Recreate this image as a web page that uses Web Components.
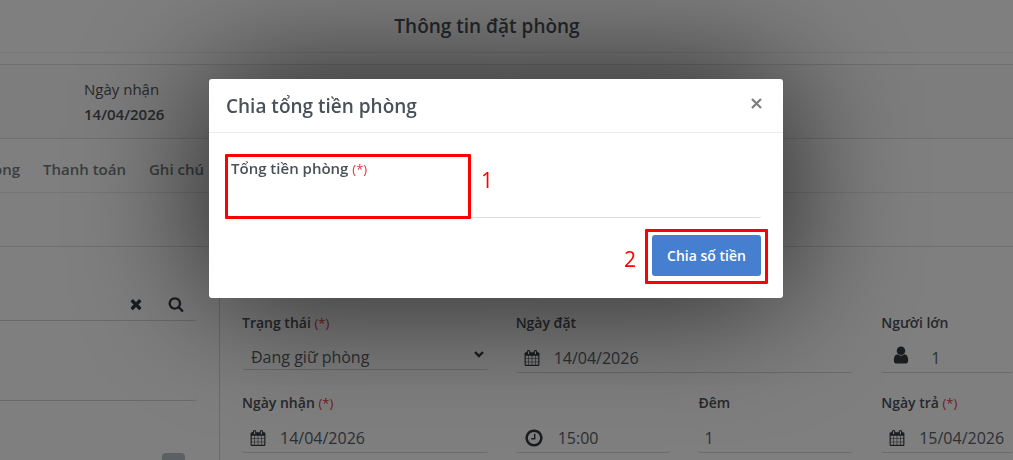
<!DOCTYPE html>
<html lang="vi">
<head>
<meta charset="utf-8">
<title>Thông tin đặt phòng</title>
<style>
body{margin:0;overflow:hidden;background:#fff;color:#495057;font-family:"Open Sans","Noto Sans",sans-serif;font-size:14px;line-height:20px}
</style>
</head>
<body>
<booking-page></booking-page>
<split-dialog heading="Chia tổng tiền phòng">
  <split-form></split-form>
</split-dialog>
<script>
const ICONS={
times:"M1490 1322q0 40-28 68l-136 136q-28 28-68 28t-68-28l-294-294-294 294q-28 28-68 28t-68-28l-136-136q-28-28-28-68t28-68l294-294-294-294q-28-28-28-68t28-68l136-136q28-28 68-28t68 28l294 294 294-294q28-28 68-28t68 28l136 136q28 28 28 68t-28 68l-294 294 294 294q28 28 28 68z",
search:"M1216 832q0-185-131.5-316.5t-316.5-131.5-316.5 131.5-131.5 316.5 131.5 316.5 316.5 131.5 316.5-131.5 131.5-316.5zm512 832q0 52-38 90t-90 38q-54 0-90-38l-343-342q-179 124-399 124-143 0-273.5-55.5t-225-150-150-225-55.5-273.5 55.5-273.5 150-225 225-150 273.5-55.5 273.5 55.5 225 150 150 225 55.5 273.5q0 220-124 399l343 343q37 37 37 90z",
user:"M1536 1399q0 109-62.5 187t-150.5 78h-854q-88 0-150.5-78t-62.5-187q0-85 8.5-160.5t31.5-152 58.5-131 94-89 134.5-34.5q131 128 313 128t313-128q76 0 134.5 34.5t94 89 58.5 131 31.5 152 8.5 160.5zm-256-887q0 159-112.5 271.5t-271.5 112.5-271.5-112.5-112.5-271.5 112.5-271.5 271.5-112.5 271.5 112.5 112.5 271.5z",
calendar:"M192 1664h288v-288h-288v288zm352 0h320v-288h-320v288zm-352-352h288v-320h-288v320zm352 0h320v-320h-320v320zm-352-384h288v-288h-288v288zm736 736h320v-288h-320v288zm-384-736h320v-288h-320v288zm768 736h288v-288h-288v288zm-384-352h320v-320h-320v320zm-352-864v-288q0-13-9.5-22.5t-22.5-9.5h-64q-13 0-22.5 9.5t-9.5 22.5v288q0 13 9.5 22.5t22.5 9.5h64q13 0 22.5-9.5t9.5-22.5zm736 864h288v-320h-288v320zm-384-384h320v-288h-320v288zm384 0h288v-288h-288v288zm32-480v-288q0-13-9.5-22.5t-22.5-9.5h-64q-13 0-22.5 9.5t-9.5 22.5v288q0 13 9.5 22.5t22.5 9.5h64q13 0 22.5-9.5t9.5-22.5zm384-64v1280q0 52-38 90t-90 38h-1408q-52 0-90-38t-38-90v-1280q0-52 38-90t90-38h128v-96q0-66 47-113t113-47h64q66 0 113 47t47 113v96h384v-96q0-66 47-113t113-47h64q66 0 113 47t47 113v96h128q52 0 90 38t38 90z",
clock:"M1024 544v448q0 14-9 23t-23 9h-320q-14 0-23-9t-9-23v-64q0-14 9-23t23-9h224v-352q0-14 9-23t23-9h64q14 0 23 9t9 23zm416 352q0-148-73-273t-198-198-273-73-273 73-198 198-73 273 73 273 198 198 273 73 273-73 198-198 73-273zm224 0q0 209-103 385.5t-279.5 279.5-385.5 103-385.5-103-279.5-279.5-103-385.5 103-385.5 279.5-279.5 385.5-103 385.5 103 279.5 279.5 103 385.5z"
};
function define(name,render){
  customElements.define(name,class extends HTMLElement{
    connectedCallback(){
      if(this.shadowRoot)return;
      this.attachShadow({mode:"open"}).innerHTML=render(this);
    }
  });
}

define("ui-icon",el=>`<style>:host{display:block;flex:none;width:16px;height:16px}svg{display:block;width:100%;height:100%;fill:currentColor}</style>
<svg viewBox="0 0 1792 1792" aria-hidden="true"><path d="${ICONS[el.getAttribute("name")]}"/></svg>`);

define("form-field",el=>{
  const icon=el.getAttribute("icon"),value=el.getAttribute("value");
  return `<style>
:host{display:block;min-width:0}
label{display:block;font-weight:600;color:#4c5056;margin-bottom:2px}
label span{font-weight:400;font-size:13px;color:#e03c3c}
.box{display:flex;align-items:center;box-sizing:border-box;height:38px;border-bottom:1px solid #d4d6da;border-radius:3px;padding:9px 0 0 6px;color:#343a40}
.box.icon{padding-left:8px;gap:14px}
.box.user{gap:20px;padding-left:10px}
.box.pick{height:35px;padding-left:9px;padding-right:3px}
ui-icon.clock{width:20px;height:20px}
ui-icon.user{width:20px;height:20px;margin-bottom:6px}
input,select{flex:1;min-width:0;width:0;border:0;padding:0;margin:0;background:none;outline:0;font:400 16px/24px "Open Sans","Noto Sans",sans-serif;color:#5a6068;appearance:none}
svg{flex:none;width:12px;height:12px;margin-bottom:6px}
</style>
<label for="c">${el.getAttribute("label")}${el.hasAttribute("required")?" <span>(*)</span>":""}</label>
${el.hasAttribute("select")
?`<div class="box pick"><select id="c"><option>${value}</option></select><svg viewBox="0 0 12 12" aria-hidden="true"><path d="M2 4l4 4 4-4" fill="none" stroke="currentColor" stroke-width="2.4"/></svg></div>`
:`<div class="box ${icon?"icon "+icon:""}">${icon?`<ui-icon class="${icon}" name="${icon}"></ui-icon>`:""}<input id="c" type="text" value="${value}"></div>`}`;
});

define("tab-bar",()=>`<style>
:host{display:block;border-bottom:1px solid #e6e8ec}
nav{display:flex;gap:23px;height:53px;align-items:center;margin-left:-7px;padding-top:6px;box-sizing:border-box}
a{font-size:15px;font-weight:600;color:#777a7e;text-decoration:none;white-space:nowrap}
</style><nav><a href="#phong">òng</a><a href="#thanh-toan">Thanh toán</a><a href="#ghi-chu">Ghi chú</a></nav>`);

define("guest-search",()=>`<style>
:host{display:block;width:197px;flex:none}
.line{display:flex;justify-content:flex-end;align-items:center;gap:24px;box-sizing:border-box;border-bottom:1px solid #d4d6da;border-radius:0 3px 3px 0}
.first{height:74px;padding:41px 13px 0 0}
.second{height:80px}
input{flex:1;min-width:0;border:0;background:none;outline:0;height:30px}
button{border:0;background:none;padding:0;color:#343a40;flex:none}
.add{display:block;width:23px;height:24px;margin:52px 12px 0 auto;background:#b9bfc9;border-radius:4px}
</style>
<div class="line first"><input type="text" aria-label="Tìm khách"><button type="button" aria-label="Xóa"><ui-icon name="times"></ui-icon></button><button type="button" aria-label="Tìm"><ui-icon name="search"></ui-icon></button></div>
<div class="line second"><input type="text" aria-label="Tên khách"></div>
<button class="add" type="button" aria-label="Thêm"></button>`);

define("booking-page",()=>`<style>
:host{display:block}
header{height:52px;border-bottom:1px solid #e9ecef;display:flex;align-items:center;justify-content:center;box-sizing:content-box;padding-right:39px}
h1{margin:0;font-size:19px;line-height:26px;font-weight:600}
.summary{margin-top:11px;border-top:1px solid #dcdfe2;border-bottom:1px solid #dcdfe2;background:#fafafa;padding:14px 84px}
dl{margin:0}
dt,dd{margin:0;line-height:20px;color:#4f5459;font-size:15px}
dd{font-weight:600;margin-top:5px}
.strip{height:53px;border-bottom:1px solid #dcdfe2}
.cols{display:flex;gap:22px;align-items:stretch}
.panel{flex:1;min-width:0;border-left:1px solid #d4d6da;padding:66px 0 20px 22px;display:grid;grid-template-columns:246fr 155fr 155fr 132fr;column-gap:28px;row-gap:20px;align-items:start;grid-auto-rows:60px}
.wide{grid-column:span 2}
</style>
<header><h1>Thông tin đặt phòng</h1></header>
<section class="summary"><dl><dt>Ngày nhận</dt><dd>14/04/2026</dd></dl></section>
<tab-bar></tab-bar>
<div class="strip"></div>
<div class="cols">
<guest-search></guest-search>
<section class="panel">
<form-field label="Trạng thái" required select value="Đang giữ phòng"></form-field>
<form-field class="wide" label="Ngày đặt" icon="calendar" value="14/04/2026"></form-field>
<form-field label="Người lớn" icon="user" value="1"></form-field>
<form-field label="Ngày nhận" required icon="calendar" value="14/04/2026"></form-field>
<form-field label="&nbsp;" icon="clock" value="15:00"></form-field>
<form-field label="Đêm" value="1"></form-field>
<form-field label="Ngày trả" required icon="calendar" value="15/04/2026"></form-field>
</section>
</div>`);

define("split-dialog",el=>`<style>
:host{position:fixed;inset:0;background:rgba(0,0,0,.5);display:block;padding:79px 21px 0 0}
.dialog{max-width:574px;margin:0 auto;background:#fff;border-radius:3px;box-shadow:0 0 135px rgba(0,0,0,.75)}
header{display:flex;align-items:center;justify-content:space-between;height:53px;padding:0 20px 0 17px;border-bottom:1px solid #e9ecef}
h2{margin:0;font-size:19px;line-height:26px;font-weight:600}
button{border:0;background:none;padding:0;width:13px;height:13px;color:#808080;margin-bottom:4px}
svg{display:block;width:13px;height:13px}
</style>
<div class="dialog" role="dialog" aria-modal="true" aria-labelledby="t">
<header><h2 id="t">${el.getAttribute("heading")}</h2><button type="button" aria-label="Đóng"><svg viewBox="0 0 13 13"><path d="M2 2l9 9M11 2l-9 9" stroke="currentColor" stroke-width="2.3"/></svg></button></header>
<slot></slot>
</div>`);

define("step-mark",el=>`<style>
:host{position:absolute;box-sizing:border-box;border:3px solid red;border-radius:1px;pointer-events:none}
span{position:absolute;color:red;font-size:21px;line-height:24px}
:host([side=right]) span{left:100%;top:11px;margin-left:13px}
:host([side=left]) span{right:100%;top:15px;margin-right:12px}
</style><span>${el.getAttribute("n")}</span>`);

define("split-form",()=>`<style>
:host{display:block;padding:25px 22px 22px}
label{display:block;font-weight:600;font-size:15px}
label span{font-weight:400;font-size:13px;color:#dc3545}
.field{position:relative}
input{display:block;box-sizing:border-box;width:100%;height:39px;border:0;border-bottom:1px solid #dcdcdc;border-radius:3px;background:none;outline:0;font:400 16px/24px "Open Sans",sans-serif;padding:0 6px}
.actions{display:flex;justify-content:flex-end;margin-top:17px}
.act{position:relative}
button{display:block;border:0;border-radius:3px;background:#467fcf;color:#fff;font:600 14px/21px "Open Sans","Noto Sans",sans-serif;padding:10px 14px;min-width:109px;white-space:nowrap}
.m1{left:-6px;top:-4px;width:246px;height:65px}
.m2{inset:-6px -7px -8px}
</style>
<div class="field"><label for="sum">Tổng tiền phòng <span>(*)</span></label><input id="sum" type="text"><step-mark class="m1" n="1" side="right"></step-mark></div>
<div class="actions"><div class="act"><button type="button">Chia số tiền</button><step-mark class="m2" n="2" side="left"></step-mark></div></div>`);
</script>
</body>
</html>
